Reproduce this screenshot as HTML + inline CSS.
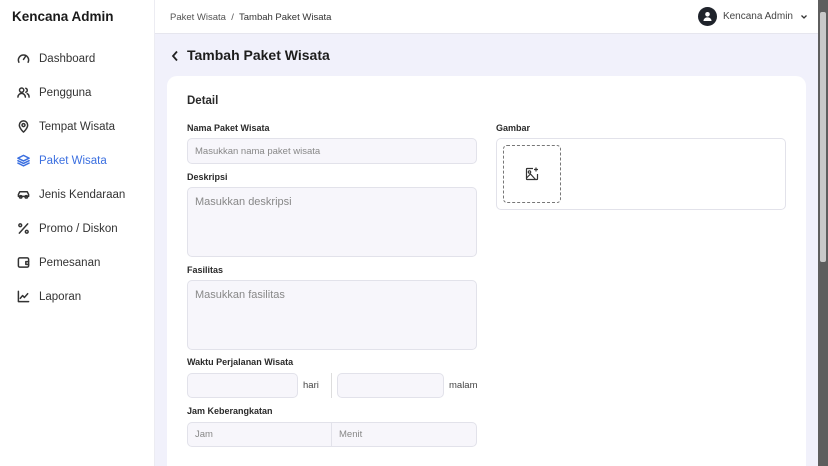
<!DOCTYPE html>
<html><head><style>
*{box-sizing:border-box;margin:0;padding:0}
html,body{width:828px;height:466px;overflow:hidden}
body{font-family:"Liberation Sans",sans-serif;background:#f1f1fb;position:relative;color:#222}
.side{position:absolute;left:0;top:0;width:155px;height:466px;background:#fff;border-right:1px solid #ececf2}
.logo{position:absolute;left:12px;top:9px;font-size:13.5px;font-weight:bold;color:#1a1a1a}
.nav{position:absolute;left:17px;font-size:11.5px;color:#333;display:flex;align-items:center}
.nav svg{width:13px;height:13px;margin-right:9px;fill:none;stroke:#333;stroke-width:1.6;stroke-linecap:round;stroke-linejoin:round}
.nav.act{color:#3b6fe0}.nav.act svg{stroke:#3b6fe0}
.head{position:absolute;left:155px;top:0;width:663px;height:34px;background:#fff;border-bottom:1px solid #e6e6ee}
.crumb{position:absolute;left:15px;top:12px;font-size:9.5px;color:#555}
.user{position:absolute;right:10px;top:7px;display:flex;align-items:center;font-size:10px;color:#444}
.av{width:19px;height:19px;border-radius:50%;background:#1f232b;margin-right:6px;position:relative}
.title{position:absolute;left:172px;top:47px;font-size:14px;font-weight:bold;color:#1d1d1d}
.card{position:absolute;left:167px;top:76px;width:639px;height:390px;background:#fff;border-radius:10px 10px 0 0}
.lbl{position:absolute;font-size:9px;font-weight:bold;color:#2a2a2a}
.inp{position:absolute;background:#f7f6fb;border:1px solid #e2e2ea;border-radius:5px;font-size:9.5px;color:#888;padding-left:7px;display:flex;align-items:center}
.ta{align-items:flex-start;padding-top:8px;font-size:11px}
.sb{position:absolute;left:818px;top:0;width:10px;height:466px;background:#5e5e5e}
.sb div{position:absolute;left:2px;top:12px;width:6px;height:250px;background:#c9c9c9;border-radius:2px}
.small{position:absolute;font-size:9.5px;color:#444}
</style></head><body>
<div class="side">
<div class="logo">Kencana Admin</div>
<div class="nav" style="top:52px"><svg viewBox="0 0 14 14"><path d="M2 11A5.5 5.5 0 1 1 12 11"/><path d="M7 8L9 5"/></svg>Dashboard</div>
<div class="nav" style="top:86px"><svg viewBox="0 0 14 14"><circle cx="5" cy="4.5" r="2.3"/><path d="M1 12c0-2.5 2-4 4-4s4 1.5 4 4M9.5 2.5a2.2 2.2 0 0 1 0 4.2M11 8.3c1.300.6 2 1.900 2 3.700"/></svg>Pengguna</div>
<div class="nav" style="top:120px"><svg viewBox="0 0 14 14"><path d="M7 13s-4.5-4-4.5-7.5a4.5 4.5 0 0 1 9 0C11.5 9 7 13 7 13z"/><circle cx="7" cy="5.5" r="1.6"/></svg>Tempat Wisata</div>
<div class="nav act" style="top:154px"><svg viewBox="0 0 14 14"><path d="M7 1.5L13 4.5 7 7.5 1 4.5z"/><path d="M1 7.2L7 10.2 13 7.2M1 9.8L7 12.8 13 9.8"/></svg>Paket Wisata</div>
<div class="nav" style="top:188px"><svg viewBox="0 0 14 14"><path d="M1.5 9V7l1.5-3h8l1.5 3v2z"/><circle cx="4" cy="9.5" r="1.3"/><circle cx="10" cy="9.5" r="1.3"/></svg>Jenis Kendaraan</div>
<div class="nav" style="top:222px"><svg viewBox="0 0 14 14"><path d="M2.5 12L11.5 2"/><circle cx="3.5" cy="3.5" r="1.5"/><circle cx="10.5" cy="10.5" r="1.5"/></svg>Promo / Diskon</div>
<div class="nav" style="top:256px"><svg viewBox="0 0 14 14"><rect x="1.5" y="2" width="11" height="10" rx="1.5"/><path d="M12.5 6H9.5v3h3"/></svg>Pemesanan</div>
<div class="nav" style="top:290px"><svg viewBox="0 0 14 14"><path d="M1.5 1.5v11h11"/><path d="M3.5 9l2.5-3 2 2 3.5-4"/></svg>Laporan</div>
</div>
<div class="head">
<div class="crumb">Paket Wisata &nbsp;/&nbsp; <span style="color:#333">Tambah Paket Wisata</span></div>
<div class="user"><div class="av"><svg viewBox="0 0 19 19" width="19" height="19"><circle cx="9.5" cy="7.3" r="2.3" fill="#fff"/><path d="M5.5 14c0-2.3 1.8-3.6 4-3.6s4 1.3 4 3.6z" fill="#fff"/></svg></div>Kencana Admin<svg width="8" height="8" viewBox="0 0 8 8" style="margin-left:7px"><path d="M1.5 2.5L4 5l2.5-2.5" stroke="#333" stroke-width="1.3" fill="none"/></svg></div>
</div>
<svg style="position:absolute;left:170px;top:50px" width="10" height="12" viewBox="0 0 10 12"><path d="M7 1.5L3 6l4 4.5" stroke="#222" stroke-width="1.8" fill="none"/></svg>
<div class="title" style="left:187px">Tambah Paket Wisata</div>
<div class="card"></div>
<div class="lbl" style="left:187px;top:95px;font-size:11.5px">Detail</div>
<div class="lbl" style="left:187px;top:123px">Nama Paket Wisata</div>
<div class="inp" style="left:187px;top:138px;width:290px;height:26px">Masukkan nama paket wisata</div>
<div class="lbl" style="left:187px;top:172px">Deskripsi</div>
<div class="inp ta" style="left:187px;top:187px;width:290px;height:70px">Masukkan deskripsi</div>
<div class="lbl" style="left:187px;top:265px">Fasilitas</div>
<div class="inp ta" style="left:187px;top:280px;width:290px;height:70px">Masukkan fasilitas</div>
<div class="lbl" style="left:187px;top:357px">Waktu Perjalanan Wisata</div>
<div class="inp" style="left:187px;top:373px;width:111px;height:25px"></div>
<div class="small" style="left:303px;top:380px">hari</div>
<div style="position:absolute;left:331px;top:373px;width:1px;height:25px;background:#ddd"></div>
<div class="inp" style="left:337px;top:373px;width:107px;height:25px"></div>
<div class="small" style="left:449px;top:380px">malam</div>
<div class="lbl" style="left:187px;top:406px">Jam Keberangkatan</div>
<div class="inp" style="left:187px;top:422px;width:145px;height:25px;border-radius:5px 0 0 5px">Jam</div>
<div class="inp" style="left:331px;top:422px;width:146px;height:25px;border-radius:0 5px 5px 0">Menit</div>
<div class="lbl" style="left:496px;top:123px">Gambar</div>
<div style="position:absolute;left:496px;top:138px;width:290px;height:72px;border:1px solid #e2e2ea;border-radius:5px;background:#fff"></div>
<div style="position:absolute;left:503px;top:145px;width:58px;height:58px;border:1.3px dashed #777;border-radius:4px"></div>
<svg style="position:absolute;left:525px;top:167px" width="14" height="14" viewBox="0 0 14 14" fill="none" stroke="#333" stroke-width="1.2"><path d="M8 1.5H2a.5.5 0 0 0-.5.5v10a.5.5 0 0 0 .5.5h10a.5.5 0 0 0 .5-.5V7"/><circle cx="4.5" cy="5" r="1.2"/><path d="M1.5 11l4-4 5 5.5M11 0.5v4M9 2.5h4"/></svg>
<div class="sb"><div></div></div>
</body></html>
